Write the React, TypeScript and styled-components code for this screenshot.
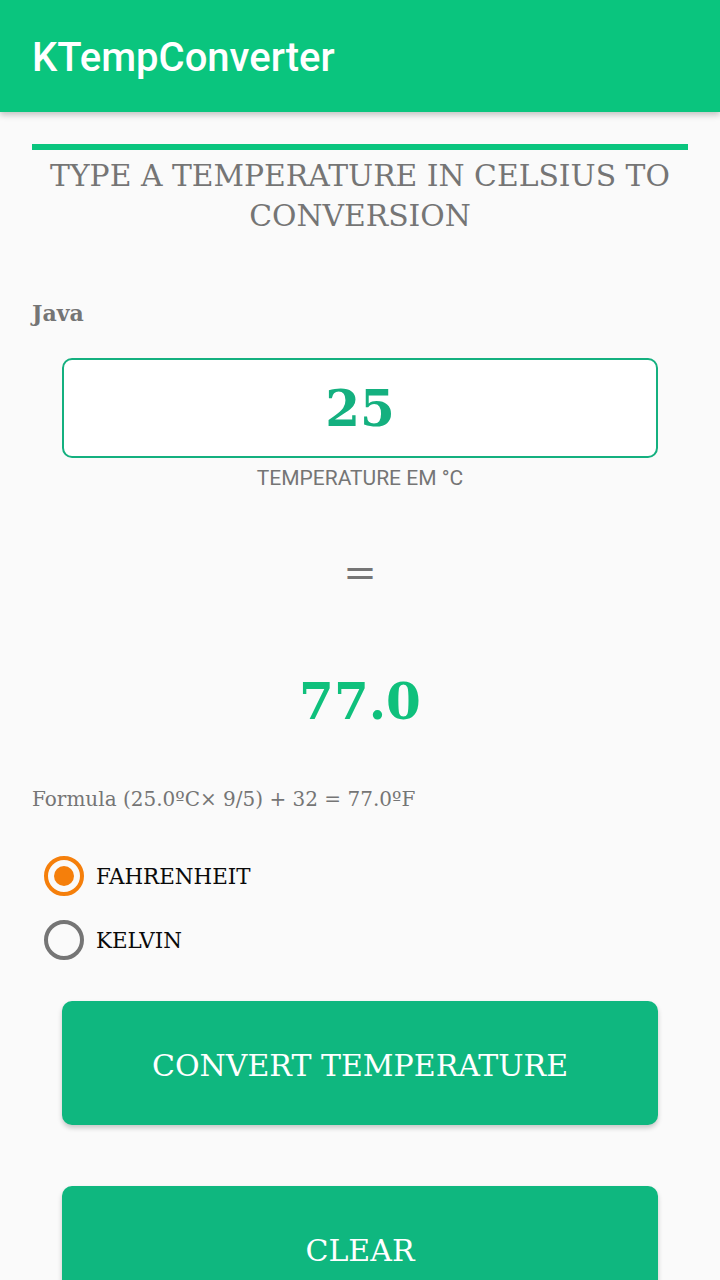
import React, { useState } from 'react';
import styled, { createGlobalStyle } from 'styled-components';

const GlobalStyle = createGlobalStyle`
	body {
		margin: 0;
		background: #fafafa;
		font-family: 'DejaVu Serif', serif;
	}
`;

const serif = `'DejaVu Serif', 'Liberation Serif', serif`;

const Screen = styled.div`
	width: 720px;
	min-height: 1280px;
	background: #fafafa;
	overflow: hidden;
`;

const AppBar = styled.header`
	height: 112px;
	background: #0ac57e;
	display: flex;
	align-items: center;
	padding-left: 32px;
	box-shadow: 0 3px 6px rgba(0, 0, 0, 0.22);
	position: relative;
	z-index: 1;
`;

const AppTitle = styled.h1`
	margin: 2px 0 0;
	font-family: Roboto, 'Liberation Sans', sans-serif;
	font-weight: 500;
	font-size: 40px;
	color: #ffffff;
	letter-spacing: 0;
`;

const Content = styled.main`
	padding: 32px 32px 0;
	display: flex;
	flex-direction: column;
`;

const Rule = styled.div`
	height: 6px;
	background: #0ac57e;
`;

const Heading = styled.h2`
	margin: 6px 0 0;
	font-family: ${serif};
	font-weight: 400;
	font-size: 29.8px;
	line-height: 40px;
	color: #757575;
	text-align: center;
`;

const Lang = styled.div`
	margin-top: 62px;
	font-family: ${serif};
	font-weight: 700;
	font-size: 22px;
	line-height: 30px;
	color: #757575;
`;

const Field = styled.div`
	margin: 30px 30px 0;
	height: 100px;
	box-sizing: border-box;
	border: 2px solid #14b07f;
	border-radius: 10px;
	background: #ffffff;
	display: flex;
	align-items: center;
	justify-content: center;
`;

const FieldInput = styled.input`
	width: 100%;
	border: none;
	outline: none;
	background: transparent;
	text-align: center;
	font-family: ${serif};
	font-weight: 700;
	font-size: 50px;
	color: #14b07f;
	padding: 0;
`;

const Hint = styled.div`
	margin-top: 8px;
	font-family: Roboto, 'Liberation Sans', sans-serif;
	font-size: 21px;
	line-height: 24px;
	color: #757575;
	text-align: center;
`;

const Equals = styled.div`
	margin-top: 58px;
	font-family: ${serif};
	font-size: 40px;
	line-height: 48px;
	color: #757575;
	text-align: center;
`;

const Result = styled.div`
	margin-top: 66px;
	font-family: ${serif};
	font-weight: 700;
	font-size: 50px;
	line-height: 80px;
	color: #0fc07c;
	text-align: center;
`;

const Formula = styled.div`
	margin-top: 42px;
	font-family: ${serif};
	font-size: 20px;
	line-height: 30px;
	color: #757575;
`;

const RadioGroup = styled.div`
	margin-top: 38px;
	display: flex;
	flex-direction: column;
	gap: 16px;
`;

const RadioRow = styled.label`
	display: flex;
	align-items: center;
	gap: 12px;
	padding-left: 12px;
	height: 48px;
	cursor: pointer;
	font-family: ${serif};
	font-size: 21.4px;
	color: #0a0a0a;
`;

const RadioCircle = styled.span<{ $on: boolean }>`
	width: 40px;
	height: 40px;
	box-sizing: border-box;
	border-radius: 50%;
	border: 4px solid ${(p) => (p.$on ? '#f57f0b' : '#757575')};
	display: flex;
	align-items: center;
	justify-content: center;

	&::after {
		content: '';
		width: 20px;
		height: 20px;
		border-radius: 50%;
		background: #f57f0b;
		display: ${(p) => (p.$on ? 'block' : 'none')};
	}
`;

const Buttons = styled.div`
	margin: 37px 30px 0;
	display: flex;
	flex-direction: column;
	gap: 61px;
`;

const ActionButton = styled.button`
	height: 124px;
	border: none;
	border-radius: 10px;
	padding: 4px 0 0;
	background: #0fb77f;
	color: #ffffff;
	font-family: ${serif};
	font-size: 30px;
	box-shadow: 0 3px 5px rgba(0, 0, 0, 0.2);
	cursor: pointer;
`;

export default function App() {
	const [value, setValue] = useState('25');
	const [unit, setUnit] = useState<'F' | 'K'>('F');

	return (
		<>
			<GlobalStyle />
			<Screen>
				<AppBar>
					<AppTitle>KTempConverter</AppTitle>
				</AppBar>
				<Content>
					<Rule />
					<Heading>TYPE A TEMPERATURE IN CELSIUS TO CONVERSION</Heading>
					<Lang>Java</Lang>
					<Field>
						<FieldInput value={value} onChange={(e) => setValue(e.target.value)} />
					</Field>
					<Hint>TEMPERATURE EM °C</Hint>
					<Equals>=</Equals>
					<Result>77.0</Result>
					<Formula>Formula (25.0ºC× 9/5) + 32 = 77.0ºF</Formula>
					<RadioGroup>
						<RadioRow onClick={() => setUnit('F')}>
							<RadioCircle $on={unit === 'F'} />
							FAHRENHEIT
						</RadioRow>
						<RadioRow onClick={() => setUnit('K')}>
							<RadioCircle $on={unit === 'K'} />
							KELVIN
						</RadioRow>
					</RadioGroup>
					<Buttons>
						<ActionButton>CONVERT TEMPERATURE</ActionButton>
						<ActionButton>CLEAR</ActionButton>
					</Buttons>
				</Content>
			</Screen>
		</>
	);
}
